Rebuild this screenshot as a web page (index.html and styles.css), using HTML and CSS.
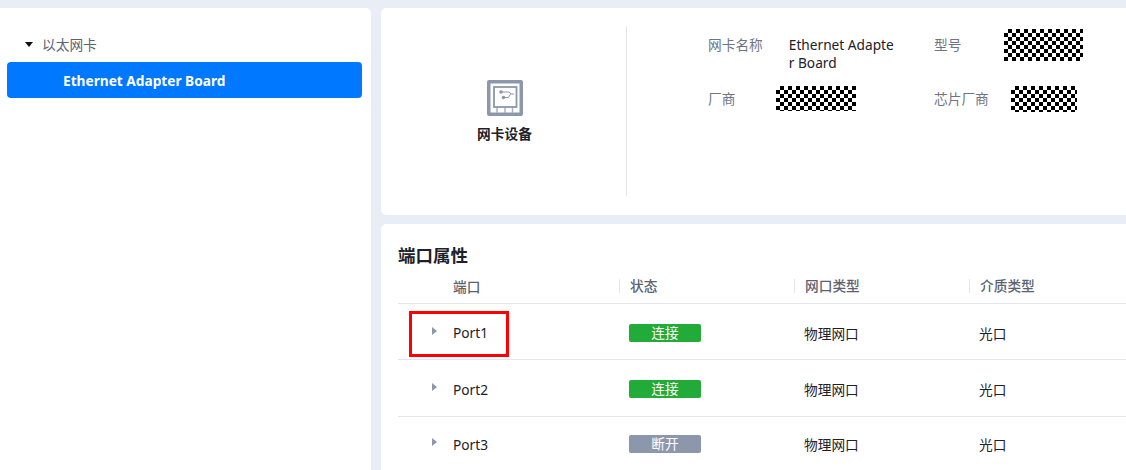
FILE: index.html
```html
<!DOCTYPE html>
<html lang="zh-CN">
<head>
<meta charset="utf-8">
<title>网卡设备</title>
<link rel="stylesheet" href="styles.css">
</head>
<body>
<div class="page">
  <aside class="side">
    <div class="tree-root"><span class="caret-down"></span><span>以太网卡</span></div>
    <div class="tree-item">Ethernet Adapter Board</div>
  </aside>
  <main class="main">
    <section class="card info">
      <div class="device">
        <svg class="device-icon" width="36" height="36" viewBox="0 0 36 36">
          <rect x="0" y="0" width="36" height="36" rx="2" fill="#8d97ab"/>
          <rect x="3.500" y="3.500" width="29" height="29" fill="#fff"/>
          <path d="M10 27v6M18 27v6M25.500 27v6" stroke="#a9b1c1" stroke-width="1.500"/>
          <rect x="7" y="7" width="22.500" height="20" fill="#fff" stroke="#8d97ab" stroke-width="1.800"/>
          <circle cx="14" cy="12" r="1.800" fill="#8d97ab"/>
          <circle cx="16.500" cy="17.500" r="1.800" fill="#8d97ab"/>
          <path d="M14 12h8l2 2h3M16.500 17.500h5l2-3.500" fill="none" stroke="#8d97ab"/>
        </svg>
        <div class="device-name">网卡设备</div>
      </div>
      <div class="props">
        <div class="prop p1"><span class="label">网卡名称</span><span class="value name">Ethernet Adapter Board</span></div>
        <div class="prop p2"><span class="label">型号</span><span class="mask m-model"></span></div>
        <div class="prop p3"><span class="label">厂商</span><span class="mask m-vendor"></span></div>
        <div class="prop p4"><span class="label">芯片厂商</span><span class="mask m-chip"></span></div>
      </div>
    </section>
    <section class="card ports">
      <h2 class="title">端口属性</h2>
      <div class="row head">
        <div class="c c1">端口</div><div class="c c2">状态</div><div class="c c3">网口类型</div><div class="c c4">介质类型</div>
      </div>
      <div class="row body">
        <div class="c c1"><span class="caret-right"></span>Port1</div><div class="c c2"><span class="tag on">连接</span></div><div class="c c3">物理网口</div><div class="c c4">光口</div>
        <div class="highlight"></div>
      </div>
      <div class="row body second">
        <div class="c c1"><span class="caret-right"></span>Port2</div><div class="c c2"><span class="tag on">连接</span></div><div class="c c3">物理网口</div><div class="c c4">光口</div>
      </div>
      <div class="row body last">
        <div class="c c1"><span class="caret-right"></span>Port3</div><div class="c c2"><span class="tag off">断开</span></div><div class="c c3">物理网口</div><div class="c c4">光口</div>
      </div>
    </section>
  </main>
</div>
</body>
</html>
```
FILE: styles.css
```css
* { box-sizing: border-box; }
html, body { margin: 0; height: 100%; overflow: hidden; }
body {
  background: #e9edf5;
  font-family: "Noto Sans", "Noto Sans CJK SC", sans-serif;
  font-size: 13.700px;
  color: #1d2129;
}
.page {
  display: grid;
  grid-template-columns: 371px 1fr;
  gap: 10px;
  padding-top: 8px;
  height: 490px;
}
.side {
  background: #fff;
  border-radius: 0 5px 0 0;
  padding: 25px 9px 0 7px;
}
.tree-root {
  display: flex;
  align-items: center;
  height: 22px;
  padding-left: 18px;
  gap: 9px;
  color: #5c6270;
}
.caret-down {
  width: 0; height: 0;
  border-left: 4.500px solid transparent;
  border-right: 4.500px solid transparent;
  border-top: 5px solid #111;
}
.tree-item {
  margin-top: 7px;
  height: 36px;
  line-height: 37px;
  background: #0078ff;
  color: #fff;
  font-weight: 700;
  border-radius: 4px;
  padding-left: 56px;
  white-space: nowrap;
}
.main { display: flex; flex-direction: column; gap: 9px; min-width: 0; }
.card { background: #fff; border-radius: 5px 0 0 5px; }
.info {
  height: 207px;
  display: flex;
  padding: 18px 0 19px;
}
.device {
  width: 246px;
  border-right: 1px solid #e3e6ec;
  display: flex;
  flex-direction: column;
  align-items: center;
  padding: 54px 0 0 2px;
  gap: 7px;
  flex: none;
}
.device-icon { display: block; }
.device-name { font-weight: 700; color: #1d2129; }
.props {
  flex: 1;
  display: grid;
  grid-template-columns: 226px 1fr;
  grid-template-rows: 54px 32px;
  margin-left: 81px;
  padding-top: 10px;
}
.prop { display: flex; align-items: flex-start; line-height: 18px; }
.label { color: #6f7584; white-space: nowrap; }
.value { color: #1d2129; }
.name { width: 108px; word-break: break-all; margin-left: 26px; }
.mask {
  display: block;
  background-color: #fff;
  background-image: conic-gradient(#000 25%, #fff 0 50%, #000 0 75%, #fff 0);
  background-size: 8px 8px;
}
.p2 .mask { width: 79px; height: 32px; margin-left: 43px; margin-top: -7px; }
.p3 .mask { width: 80px; height: 25px; margin-left: 41px; margin-top: -4px; }
.p4 .mask { width: 66px; height: 26px; margin-left: 22px; margin-top: -4px; }
.ports {
  flex: 1;
  padding: 20px 0 0 17px;
  overflow: hidden;
}
.title {
  margin: 0;
  font-size: 17.500px;
  font-weight: 700;
  line-height: 23px;
  color: #1d2129;
}
.row {
  position: relative;
  display: grid;
  grid-template-columns: 221px 175px 175px 1fr;
  align-items: center;
  border-bottom: 1px solid #e3e6ee;
}
.head { height: 37px; padding-top: 2px; font-weight: 500; color: #5c6270; }
.body { height: 56px; padding-top: 2px; }
.second { height: 57px; }
.last { height: 54px; padding-top: 0; border-bottom: 0; }
.c { white-space: nowrap; padding-left: 10px; }
.c1 { padding-left: 55px; position: relative; }
.head .c2, .head .c3, .head .c4 { border-left: 1px solid #e3e6ee; line-height: 14px; }
.caret-right {
  position: absolute;
  left: 34px;
  top: 50%;
  margin-top: -6px;
  width: 0; height: 0;
  border-top: 4px solid transparent;
  border-bottom: 4px solid transparent;
  border-left: 5px solid #8d97ab;
}
.tag {
  display: block;
  width: 72px;
  height: 18px;
  line-height: 18px;
  border-radius: 2px;
  text-align: center;
  color: #fff;
}
.on { background: #22ab38; }
.off { background: #8d97ab; }
.highlight {
  position: absolute;
  left: 11px;
  top: 7px;
  width: 100px;
  height: 46px;
  border: 3px solid #f00;
}
```
